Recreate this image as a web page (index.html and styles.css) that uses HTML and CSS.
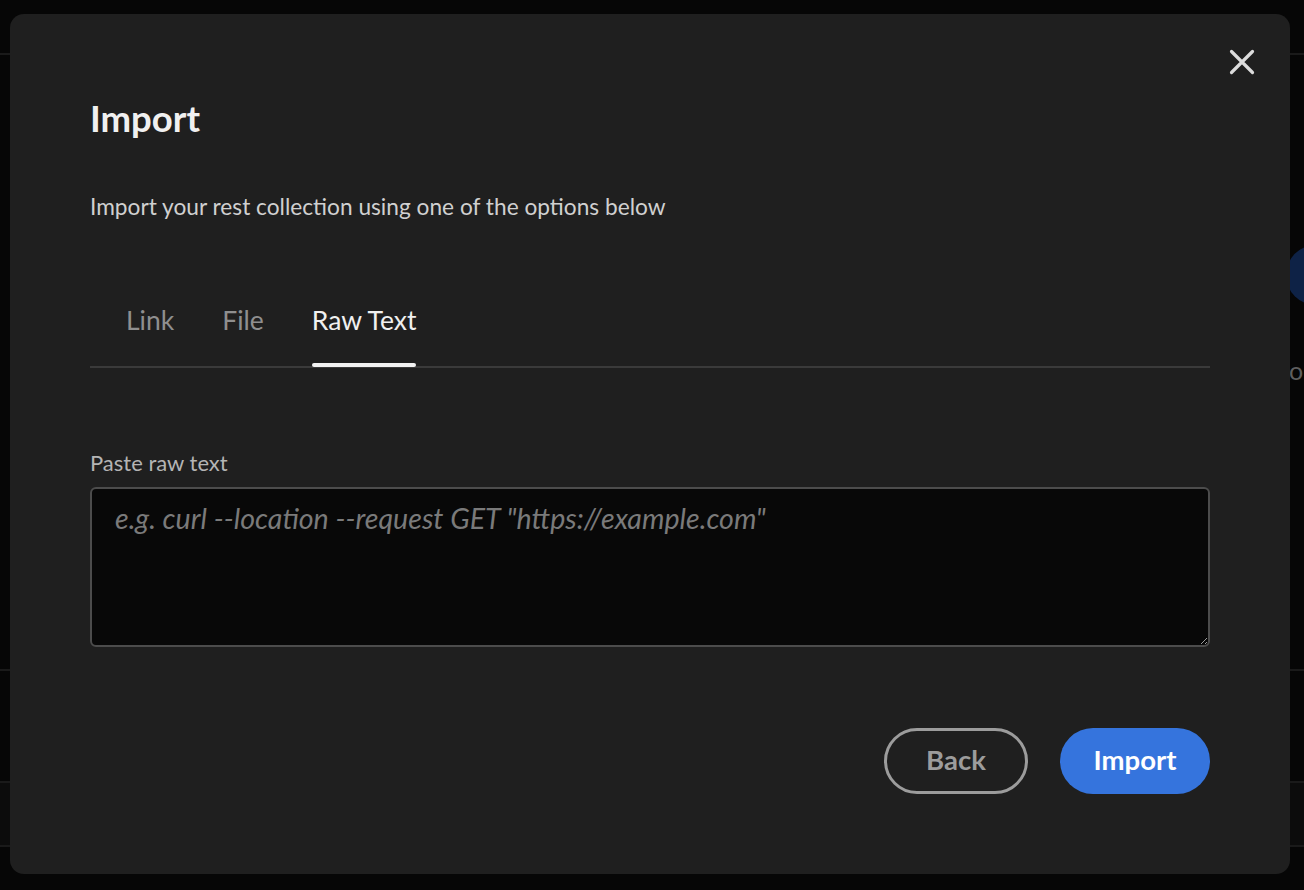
FILE: index.html
```html
<!DOCTYPE html>
<html lang="en">
<head>
<meta charset="utf-8">
<title>Import</title>
<link rel="stylesheet" href="styles.css">
</head>
<body>
<div class="app">
  <div class="app-row r1"></div>
  <div class="app-row r2"><span class="avatar"></span><span class="app-text">o</span></div>
  <div class="app-row r3"></div>
  <div class="app-row r4"></div>
  <div class="app-row r5"></div>
</div>
<div class="overlay">
  <div class="modal" role="dialog">
    <button class="close" aria-label="Close">
      <svg width="26" height="26" viewBox="0 0 26 26"><path d="M2.5 2.5L23.5 23.5M23.5 2.5L2.5 23.5" stroke="#dcdcdc" stroke-width="3.2" stroke-linecap="round" fill="none"/></svg>
    </button>
    <h1 class="title">Import</h1>
    <p class="subtitle">Import your rest collection using one of the options below</p>
    <div class="tabs">
      <div class="tab">Link</div>
      <div class="tab">File</div>
      <div class="tab active">Raw Text</div>
    </div>
    <label class="label" for="raw">Paste raw text</label>
    <textarea id="raw" class="raw" placeholder="e.g. curl --location --request GET &quot;https://example.com&quot;"></textarea>
    <div class="actions">
      <button class="btn back">Back</button>
      <button class="btn primary">Import</button>
    </div>
  </div>
</div>
</body>
</html>
```
FILE: styles.css
```css
* { box-sizing: border-box; }
html, body { margin: 0; padding: 0; }
body {
  width: 1304px;
  height: 890px;
  overflow: hidden;
  background: #060606;
  font-family: "Lato", "Liberation Sans", sans-serif;
}
.app {
  display: flex;
  flex-direction: column;
  width: 100%;
  height: 100%;
}
.app-row {
  width: 100%;
  border-bottom: 2px solid #1a1a1a;
  position: relative;
}
.r1 { height: 55px; }
.r2 { height: 616px; }
.r3 { height: 112px; }
.r4 { height: 64px; background: #0c0c0c; }
.r5 { flex: 1; border: none; }
.avatar {
  position: absolute;
  left: 1286px;
  top: 190px;
  width: 60px;
  height: 60px;
  border-radius: 50%;
  background: #0e2246;
}
.app-text {
  position: absolute;
  left: 1289px;
  top: 300px;
  font-size: 25px;
  color: #5e5e5e;
}
.overlay {
  position: fixed;
  inset: 0;
  padding: 14px 14px 16px 10px;
}
.modal {
  position: relative;
  height: 100%;
  background: #1f1f1f;
  border-radius: 14px;
  padding: 82px 80px 0 80px;
  display: flex;
  flex-direction: column;
}
.close {
  position: absolute;
  top: 35px;
  right: 35px;
  width: 26px;
  height: 26px;
  padding: 0;
  border: none;
  background: none;
  display: flex;
}
.title {
  margin: 0;
  font-size: 36.5px;
  line-height: 44px;
  font-weight: 700;
  color: #f0f0f0;
}
.subtitle {
  margin: 53px 0 0 0;
  font-size: 22.7px;
  line-height: 28px;
  color: #d0d0d0;
}
.tabs {
  margin-top: 76px;
  display: flex;
  gap: 48px;
  padding-left: 36px;
  border-bottom: 2px solid #3a3a3a;
}
.tab {
  font-size: 26.5px;
  line-height: 30px;
  padding: 8px 0 31px;
  color: #8f8f8f;
  position: relative;
}
.tab.active { color: #f0f0f0; }
.tab.active::after {
  content: "";
  position: absolute;
  left: 0;
  right: 0;
  bottom: -1px;
  height: 4px;
  border-radius: 2px;
  background: #f2f2f2;
}
.label {
  margin-top: 82px;
  font-size: 22px;
  line-height: 26px;
  color: #b4b4b4;
}
.raw {
  display: block;
  margin-top: 11px;
  height: 160px;
  width: 100%;
  background: #080808;
  border: 2px solid #4c4c4c;
  border-radius: 6px;
  padding: 12px 23px;
  font-family: "Lato", "Liberation Sans", sans-serif;
  font-size: 28.6px;
  line-height: 34px;
  color: #ddd;
  resize: vertical;
  outline: none;
}
.raw::placeholder {
  color: #7a7a7a;
  font-style: italic;
}
.actions {
  margin-top: 81px;
  display: flex;
  justify-content: flex-end;
  gap: 32px;
}
.btn {
  height: 66px;
  border-radius: 33px;
  padding: 0 0 4px 0;
  font-family: "Lato", "Liberation Sans", sans-serif;
  font-size: 27.5px;
  font-weight: 700;
  cursor: pointer;
}
.back {
  width: 144px;
  background: transparent;
  border: 3px solid #9c9c9c;
  color: #9c9c9c;
}
.primary {
  width: 150px;
  background: #3574dd;
  border: none;
  color: #ffffff;
}
```
